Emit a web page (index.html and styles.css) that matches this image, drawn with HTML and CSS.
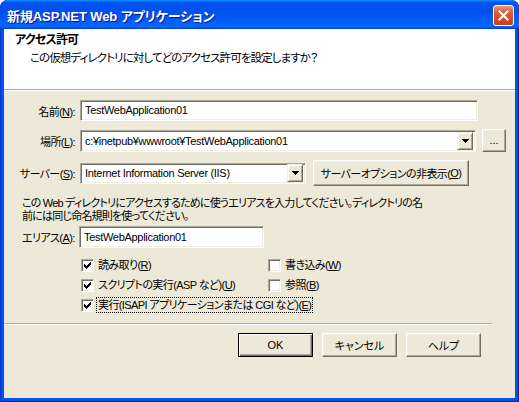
FILE: index.html
```html
<!DOCTYPE html>
<html lang="ja">
<head>
<meta charset="utf-8">
<title>新規ASP.NET Web アプリケーション</title>
<link rel="stylesheet" href="styles.css">
</head>
<body>
<div class="window">
  <div class="titlebar">
    <span class="title">新規ASP.NET Web アプリケーション</span>
    <div class="close"><svg width="11" height="11" viewBox="0 0 11 11"><path d="M1.5 1.5L9.5 9.5M9.5 1.5L1.5 9.5" stroke="#fff" stroke-width="2.2" stroke-linecap="square"/></svg></div>
  </div>
  <div class="client">
    <div class="header">
      <div class="h-title">アクセス許可</div>
      <div class="h-sub">この仮想ディレクトリに対してどのアクセス許可を設定しますか？</div>
    </div>
    <div class="etch"></div>
    <div class="content">
      <div class="form">
        <label class="lbl">名前(<u>N</u>):</label>
        <div class="row"><div class="field name">TestWebApplication01</div></div>
        <label class="lbl">場所(<u>L</u>):</label>
        <div class="row">
          <div class="combo loc"><span class="val">c:¥inetpub¥wwwroot¥TestWebApplication01</span><span class="drop"><svg width="7" height="4" viewBox="0 0 7 4"><path d="M0 0h7v1h-1v1h-1v1h-1v1h-1v-1h-1v-1h-1v-1h-1z" fill="#000"/></svg></span></div>
          <div class="btn dots">...</div>
        </div>
        <label class="lbl">サーバー(<u>S</u>):</label>
        <div class="row">
          <div class="combo srv"><span class="val">Internet Information Server (IIS)</span><span class="drop"><svg width="7" height="4" viewBox="0 0 7 4"><path d="M0 0h7v1h-1v1h-1v1h-1v1h-1v-1h-1v-1h-1v-1h-1z" fill="#000"/></svg></span></div>
          <div class="btn srvopt">サーバーオプションの非表示(<u>O</u>)</div>
        </div>
      </div>
      <p class="desc">この Web ディレクトリにアクセスするために使うエリアスを入力してください。ディレクトリの名<br>前には同じ命名規則を使ってください。</p>
      <div class="alias">
        <label class="alias-lbl">エリアス(<u>A</u>):</label>
        <div class="field alias-f">TestWebApplication01</div>
      </div>
      <div class="checks">
        <div class="chk"><span class="box"><svg width="9" height="9" viewBox="0 0 9 9"><path d="M7 1h1v1h-1z M6 2h2v1h-2z M1 3h1v1h-1z M5 3h3v1h-3z M1 4h2v1h-2z M4 4h3v1h-3z M1 5h5v1h-5z M2 6h3v1h-3z M3 7h1v1h-1z" fill="#000"/></svg></span><span class="ct">読み取り(<u>R</u>)</span></div>
        <div class="chk"><span class="box"></span><span class="ct">書き込み(<u>W</u>)</span></div>
        <div class="chk"><span class="box"><svg width="9" height="9" viewBox="0 0 9 9"><path d="M7 1h1v1h-1z M6 2h2v1h-2z M1 3h1v1h-1z M5 3h3v1h-3z M1 4h2v1h-2z M4 4h3v1h-3z M1 5h5v1h-5z M2 6h3v1h-3z M3 7h1v1h-1z" fill="#000"/></svg></span><span class="ct">スクリプトの実行(ASP など)(<u>U</u>)</span></div>
        <div class="chk"><span class="box"></span><span class="ct">参照(<u>B</u>)</span></div>
        <div class="chk wide"><span class="box"><svg width="9" height="9" viewBox="0 0 9 9"><path d="M7 1h1v1h-1z M6 2h2v1h-2z M1 3h1v1h-1z M5 3h3v1h-3z M1 4h2v1h-2z M4 4h3v1h-3z M1 5h5v1h-5z M2 6h3v1h-3z M3 7h1v1h-1z" fill="#000"/></svg></span><span class="ct focus">実行(ISAPI アプリケーションまたは CGI など)(<u>E</u>)</span></div>
      </div>
    </div>
    <div class="etch bottom"></div>
    <div class="buttons">
      <div class="btn push default">OK</div>
      <div class="btn push">キャンセル</div>
      <div class="btn push">ヘルプ</div>
    </div>
  </div>
</div>
</body>
</html>
```
FILE: styles.css
```css
* { box-sizing: border-box; }
html, body { margin: 0; padding: 0; background: #fff; }
body {
  font-family: "Liberation Sans", "Noto Sans CJK JP", sans-serif;
  font-size: 11px;
  letter-spacing: -0.6px;
  font-feature-settings: "palt";
  color: #000;
}
u { text-decoration: underline; text-underline-offset: 1px; }

.window {
  width: 519px;
  height: 402px;
  background: #0054e3;
  border-radius: 8px 8px 0 0;
  box-shadow: inset 1px 0 #0831d9, inset -1px 0 #001ea0, inset 0 -1px #001ea0;
  display: flex;
  flex-direction: column;
  padding: 0 4px 4px 4px;
  overflow: hidden;
}

.titlebar {
  height: 29px;
  margin: 0 -4px;
  padding: 0 5px 0 7px;
  display: flex;
  align-items: center;
  justify-content: space-between;
  border-radius: 8px 8px 0 0;
  background: linear-gradient(180deg, #0997ff, #0053ee 8%, #0050ee 40%, #0066ff 88%, #0066ff 93%, #005bff 95%, #003dd7 96%, #003dd7);
}
.title {
  color: #fff;
  font-weight: bold;
  font-size: 13px;
  letter-spacing: -0.1px;
  text-shadow: 1px 1px #0f1089;
  padding-top: 1px;
}
.close {
  width: 21px;
  height: 21px;
  border: 1px solid #fff;
  border-radius: 3px;
  background: linear-gradient(180deg, #ea9479 0, #e0603d 30%, #d54a25 70%, #c8401d);
  display: flex;
  align-items: center;
  justify-content: center;
  margin-top: 1px;
}

.client {
  flex: 1;
  background: #ece9d8;
  display: flex;
  flex-direction: column;
}

.header {
  background: #fff;
  height: 60px;
  padding: 4px 0 0 11px;
}
.h-title { font-weight: bold; font-size: 12px; letter-spacing: -0.8px; line-height: 14px; height: 14px; }
.h-sub { line-height: 14px; margin: 4px 0 0 15px; font-size: 11.5px; letter-spacing: -0.9px; }

.etch {
  height: 2px;
  border-top: 1px solid #aca899;
  border-bottom: 1px solid #fff;
}

.content { display: flex; flex-direction: column; }

.form {
  margin-top: 9px;
  display: grid;
  grid-template-columns: 76px 430px;
  grid-template-rows: 21px 23px 26px;
  row-gap: 8px;
  align-items: center;
}
.lbl { text-align: right; padding-right: 5px; white-space: nowrap; }
.row { display: flex; align-items: center; height: 100%; }

.field, .combo {
  border: 1px solid;
  border-color: #aca899 #fff #fff #aca899;
  box-shadow: inset 1px 1px #716f64, inset -1px -1px #f1efe2;
  background: #fff;
  font-size: 11px;
  letter-spacing: -0.3px;
  white-space: nowrap;
}
.field { height: 21px; line-height: 19px; padding-left: 4px; }
.name { width: 398px; }

.combo {
  height: 22px;
  display: flex;
  align-items: center;
  padding: 2px;
}
.combo .val { flex: 1; padding-left: 2px; line-height: 18px; }
.drop {
  width: 16px;
  height: 18px;
  display: flex;
  align-items: center;
  justify-content: center;
  background: #ece9d8;
  border: 1px solid;
  border-color: #f1efe2 #716f64 #716f64 #f1efe2;
  box-shadow: inset 1px 1px #fff, inset -1px -1px #aca899;
}
.loc { width: 396px; }
.srv { width: 226px; height: 21px; }

.btn {
  background: #ece9d8;
  border: 1px solid;
  border-color: #fff #716f64 #716f64 #fff;
  box-shadow: inset -1px -1px #aca899, inset 1px 1px #f1efe2;
  display: flex;
  align-items: center;
  justify-content: center;
  white-space: nowrap;
}
.dots { width: 24px; height: 23px; margin-left: 6px; font-size: 11px; padding-bottom: 2px; letter-spacing: 0; }
.srvopt { height: 26px; margin-left: 7px; padding: 0 4px; width: 156px; }

.desc {
  margin: 11px 0 0 18px;
  line-height: 13px;
  letter-spacing: -0.8px;
}

.alias { display: flex; align-items: center; margin-top: 3px; margin-left: 18px; }
.alias-lbl { width: 57px; white-space: nowrap; }
.alias-f { width: 185px; height: 22px; line-height: 20px; }

.checks {
  margin-top: 7px;
  margin-left: 77px;
  display: grid;
  grid-template-columns: 187px auto;
  grid-auto-rows: 20px;
  align-items: center;
}
.chk { display: flex; align-items: center; white-space: nowrap; }
.chk.wide { grid-column: 1 / 3; }
.box {
  width: 13px;
  height: 13px;
  border: 1px solid;
  border-color: #aca899 #fff #fff #aca899;
  box-shadow: inset 1px 1px #716f64, inset -1px -1px #f1efe2;
  background: #fff;
  display: flex;
  align-items: center;
  justify-content: center;
  flex: none;
}
.ct { margin-left: 2px; padding: 0 1px; border: 1px solid transparent; line-height: 14px; }
.ct.focus { border: 1px dotted #000; }

.etch.bottom { margin-top: 8px; width: 488px; }

.buttons {
  margin-top: 8px;
  padding-left: 234px;
  display: flex;
  gap: 9px;
}
.push { width: 75px; height: 24px; letter-spacing: 0; }
.push.default {
  border: 1px solid #000;
  box-shadow: inset 1px 1px #fff, inset -1px -1px #716f64, inset -2px -2px #aca899;
}
```
